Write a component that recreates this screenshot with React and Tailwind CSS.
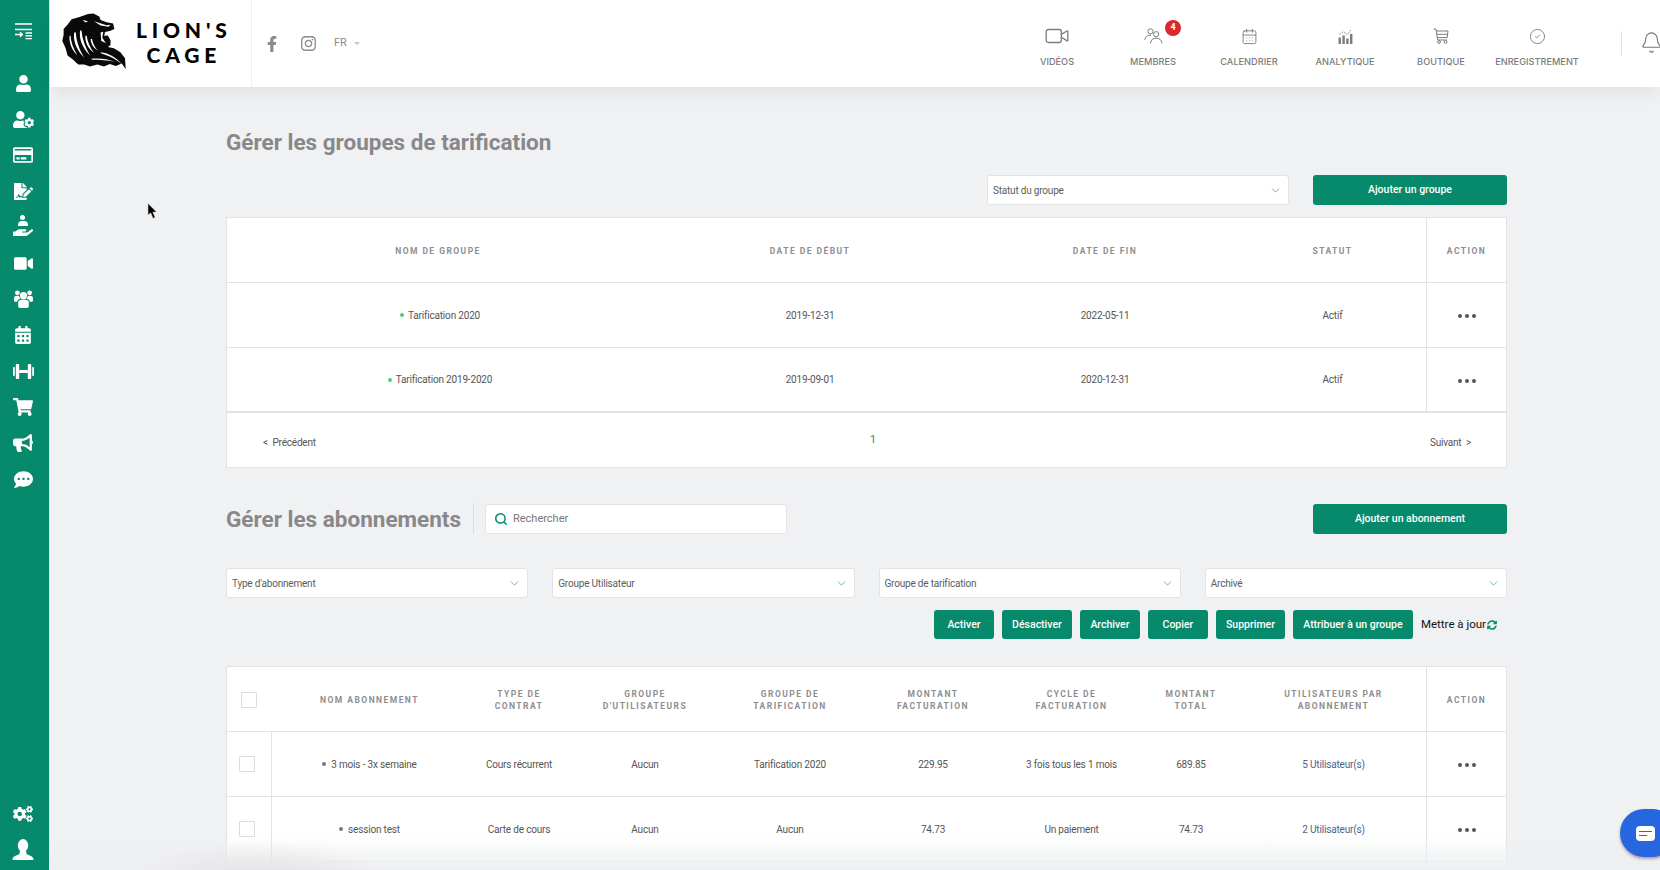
import { ChevronDown, Search, Video, CalendarDays, CircleCheck, Bell } from "lucide-react";
import { FaUser, FaUserCog, FaRegCreditCard, FaFileSignature, FaHandHolding, FaVideo, FaCalendarAlt, FaShoppingCart, FaBullhorn, FaCommentDots, FaCogs, FaFacebookF, FaInstagram, FaSyncAlt } from "react-icons/fa";

const LionLogo = () => (
  <svg viewBox="30 30 200 180" className="w-[66px] h-[60px] shrink-0 -mt-[5px]">
    <path
      fill="#0a0a0a"
      d="M112 38 L128 37 L146 46 L150 56 L168 63 L188 67 L192 84 L178 90 L166 92 L160 104 L172 103 L180 118 L180 132 L172 138 L190 142 L210 154 L224 172 L226 205 L214 188 L196 196 L178 190 L160 197 L140 191 L118 197 L100 191 L82 191 L66 176 L50 164 L44 142 L34 120 L38 100 L38 84 L52 68 L62 54 L84 48 Z"
    />
    <g fill="#fff">
      <path d="M56 104 C54 124 62 146 80 164 C68 144 60 124 59 104 Z" />
      <path d="M70 94 C66 118 76 146 100 170 C86 146 76 120 75 94 Z" />
      <path d="M88 88 C84 112 94 140 118 164 C104 140 94 114 92 88 Z" />
      <path d="M104 104 C102 124 112 142 130 156 C118 140 110 122 108 104 Z" />
      <path d="M120 114 C120 128 128 140 142 150 C132 138 126 126 124 114 Z" />
      <path d="M150 154 C172 156 196 168 216 192 C196 174 172 164 152 158 Z" />
      <path d="M122 174 C146 172 172 174 194 184 C172 178 146 177 124 177 Z" />
      <path d="M130 60 L168 72 L180 71 L174 77 L150 73 Z" />
      <path d="M96 56 L112 60 L104 64 Z" />
      <path d="M150 94 L158 92 L155 110 L166 126 L152 120 Z" />
      <path d="M162 94 L176 92 L172 97 L163 98 Z" />
    </g>
  </svg>
);

const PersonOverHand = () => (
  <span className="relative flex h-5 w-5 items-end justify-center">
    <span className="absolute top-[-2px] left-[7px] h-[5px] w-[5px] rounded-full bg-white" />
    <span className="absolute top-[4px] left-[5px] h-[5px] w-[10px] rounded-t-[4px] bg-white" />
    <FaHandHolding size={20} />
  </span>
);

const Bust = () => (
  <svg viewBox="0 0 22 22" className="w-[22px] h-[22px]" fill="#fff">
    <ellipse cx="11" cy="6.5" rx="5.2" ry="6.5" />
    <path d="M8 12 L14 12 L14.6 15 C17 16.6 20 16.8 21.5 19.4 C22 20.6 21 21 20 21 L2 21 C1 21 0 20.6 .5 19.4 C2 16.8 5 16.6 7.4 15 Z" />
  </svg>
);

const IndentIcon = () => (
  <svg viewBox="0 0 17 17" className="w-[17px] h-[17px]" fill="none" stroke="#fff" strokeWidth="1.4">
    <path d="M0 1h17M0 6.5h17" />
    <path d="M0 11.5h7M5 9.3l2.4 2.2L5 13.7M10.5 10h6.5M10.5 12.8h6.5M10.5 15.6h6.5" />
  </svg>
);

const Dumbbell = () => (
  <svg viewBox="0 0 21 15" className="w-[21px] h-[15px]" fill="#fff">
    <rect x="0" y="3" width="1.8" height="9" rx=".8" />
    <rect x="2.8" y="0" width="3.4" height="15" rx="1" />
    <rect x="6.2" y="6" width="8.6" height="3" />
    <rect x="14.8" y="0" width="3.4" height="15" rx="1" />
    <rect x="19.2" y="3" width="1.8" height="9" rx=".8" />
  </svg>
);

const Group = () => (
  <svg viewBox="0 0 19 18" className="w-[19px] h-[18px]" fill="#fff">
    <circle cx="9.5" cy="5.6" r="3.6" />
    <circle cx="3.4" cy="2.8" r="2.4" />
    <circle cx="15.6" cy="2.8" r="2.4" />
    <path d="M4.2 12.6 C4.2 10.4 6 9.6 9.5 9.6 C13 9.6 14.8 10.4 14.8 12.6 L14.8 16 C14.8 17 14 18 13 18 L6 18 C5 18 4.2 17 4.2 16 Z" />
    <path d="M0 8.4 C0 6.4 1.4 5.8 3.4 5.8 L5 6 C5.4 7.2 6 8 6.6 8.6 C4.6 9.2 3.4 10 3.2 11.8 L1 11.8 C.4 11.8 0 11.2 0 10.6 Z" />
    <path d="M19 8.4 C19 6.4 17.6 5.8 15.6 5.8 L14 6 C13.6 7.2 13 8 12.4 8.6 C14.4 9.2 15.6 10 15.8 11.8 L18 11.8 C18.6 11.8 19 11.2 19 10.6 Z" />
  </svg>
);

const sideIcons = [
  <FaUser size={17} />,
  <FaUserCog size={21} />,
  <FaRegCreditCard size={20} />,
  <FaFileSignature size={19} />,
  <PersonOverHand />,
  <FaVideo size={19} />,
  <Group />,
  <FaCalendarAlt size={18} />,
  <Dumbbell />,
  <FaShoppingCart size={20} />,
  <FaBullhorn size={20} />,
  <FaCommentDots size={19} />,
];

const Sidebar = () => (
  <aside className="w-[50px] shrink-0 pr-[3px] bg-[#078a6c] border-r border-[#cfe6df] text-white flex flex-col items-center">
    <div className="mt-[23px] mb-[25px] h-[17px]">
      <IndentIcon />
    </div>
    {sideIcons.map((icon, i) => (
      <div key={i} className="h-[36px] flex items-center justify-center">
        {icon}
      </div>
    ))}
    <div className="mt-auto mb-[9px] flex flex-col items-center gap-[15px]">
      <FaCogs size={20} />
      <Bust />
    </div>
  </aside>
);

const MembersIcon = () => (
  <svg viewBox="0 0 19 16" className="w-[19px] h-[16px]" fill="none" stroke="currentColor" strokeWidth="1">
    <circle cx="6.5" cy="3.4" r="2.6" />
    <circle cx="12.2" cy="6.2" r="2.6" />
    <path d="M.7 11.8 C1.4 8.8 3.4 7.2 7 7.2" />
    <path d="M6.4 15.4 C6.8 11.8 9 10.2 12.2 10.2 C15.4 10.2 17.6 11.8 18 15.4" />
  </svg>
);

const AnalyticsIcon = () => (
  <svg viewBox="0 0 15 16" className="w-[15px] h-[16px]" fill="currentColor">
    <rect x="0.5" y="9.5" width="2.4" height="6.5" />
    <rect x="4.4" y="7.5" width="2.4" height="8.5" />
    <rect x="8.2" y="10.5" width="2.4" height="5.5" />
    <rect x="12" y="6" width="2.4" height="10" />
    <path d="M1.6 6.4 L5.6 3.6 L9.4 6.8 L13.4 1.2" fill="none" stroke="currentColor" strokeWidth=".9" strokeDasharray="1.6 1.2" />
  </svg>
);

const CartIcon = () => (
  <svg viewBox="0 0 16 16" className="w-[16px] h-[16px]" fill="none" stroke="currentColor" strokeWidth="1">
    <path d="M.5 1 H3 L4.6 12 H14" />
    <path d="M3.3 3 H15 L14.2 9.6 H4.3" />
    <path d="M3.8 6.3 H14.6" />
    <circle cx="6" cy="14" r="1.4" />
    <circle cx="12.6" cy="14" r="1.4" />
  </svg>
);

const navItems = [
  { label: "VIDÉOS", icon: <Video size={26} strokeWidth={1.2} /> },
  { label: "MEMBRES", icon: <MembersIcon />, badge: "4" },
  { label: "CALENDRIER", icon: <CalendarDays size={17} strokeWidth={1.3} /> },
  { label: "ANALYTIQUE", icon: <AnalyticsIcon /> },
  { label: "BOUTIQUE", icon: <CartIcon /> },
  { label: "ENREGISTREMENT", icon: <CircleCheck size={17} strokeWidth={1.3} /> },
];

const Header = () => (
  <header className="h-[87px] shrink-0 bg-white flex shadow-[0_10px_16px_-2px_rgba(0,0,0,0.06)] relative z-10">
    <div className="w-[202px] shrink-0 border-r border-[#f0f0f2] flex items-center pl-[11px] gap-[9px]">
      <LionLogo />
      <div className="-mt-[4px] font-['Lato',sans-serif] font-black text-[21px] leading-[25px] tracking-[0.23em] text-center text-black">
        <div>LION'S</div>
        <div>CAGE</div>
      </div>
    </div>
    <div className="flex items-center pl-[12px] text-[#8a8a8a]">
      <FaFacebookF size={16} />
      <FaInstagram size={17} className="ml-[20px]" />
      <span className="ml-[17px] text-[11px]">FR</span>
      <span className="ml-[7px] w-0 h-0 border-x-[3px] border-x-transparent border-t-[3px] border-t-[#c4c4c4]" />
    </div>
    <nav className="ml-auto flex items-start text-[#7c7c7c]">
      {navItems.map((n) => (
        <div key={n.label} className="w-[96px] pt-[27px] flex flex-col items-center relative">
          <div className="h-[18px] flex items-center">{n.icon}</div>
          <div className="mt-[11px] text-[9.2px] font-['Inter',sans-serif] font-medium leading-[12px] whitespace-nowrap">{n.label}</div>
          {n.badge && (
            <span className="absolute top-[20px] left-[60px] h-4 w-4 rounded-full bg-[#d9292f] text-white text-[9px] font-bold flex items-center justify-center">
              {n.badge}
            </span>
          )}
        </div>
      ))}
      <div className="ml-[36px] mt-[31px] w-[39px] h-[24px] border-l border-[#e0e0e0] overflow-visible pl-[18px] text-[#777]">
        <Bell size={23} strokeWidth={1.2} />
      </div>
    </nav>
  </header>
);

const Select = ({ label, className = "" }) => (
  <div className={"h-[30px] bg-white border border-[#e3e3e6] rounded-[3px] flex items-center justify-between pl-[5px] pr-[6px] text-[10px] tracking-[-0.02em] text-[#5c5c5c] " + className}>
    {label}
    <ChevronDown size={13} strokeWidth={1.1} className="text-[#078a6c]" />
  </div>
);

const GreenBtn = ({ children, className }) => (
  <button className={"bg-[#078a6c] text-white text-[10.5px] font-medium rounded-[3px] flex items-center justify-center " + className}>
    {children}
  </button>
);

const Dots = () => (
  <span className="flex gap-[3px] mt-[2px]">
    <i className="w-1 h-1 rounded-full bg-[#555]" />
    <i className="w-1 h-1 rounded-full bg-[#555]" />
    <i className="w-1 h-1 rounded-full bg-[#555]" />
  </span>
);

const Th = ({ children, className = "" }) => (
  <div className={"flex items-center justify-center text-center pt-[1px] text-[8.5px] font-bold tracking-[0.17em] leading-[12px] text-[#8e8e90] " + className}>
    {children}
  </div>
);

const Td = ({ children, className = "text-[#555]" }) => (
  <div className={"flex items-center justify-center text-center text-[10px] tracking-[-0.018em] " + className}>
    {children}
  </div>
);

const groups = [
  { name: "Tarification 2020", start: "2019-12-31", end: "2022-05-11", status: "Actif" },
  { name: "Tarification 2019-2020", start: "2019-09-01", end: "2020-12-31", status: "Actif" },
];

const subs = [
  { name: "3 mois - 3x semaine", type: "Cours récurrent", group: "Aucun", tarif: "Tarification 2020", amount: "229.95", cycle: "3 fois tous les 1 mois", total: "689.85", users: "5 Utilisateur(s)" },
  { name: "session test", type: "Carte de cours", group: "Aucun", tarif: "Aucun", amount: "74.73", cycle: "Un paiement", total: "74.73", users: "2 Utilisateur(s)" },
];

const groupCols = "grid grid-cols-[422px_322px_268px_187px_1fr]";
const subCols = "grid grid-cols-[45px_195px_104px_148px_142px_144px_133px_106px_182px_1fr]";

const GroupsTable = () => (
  <div className="mt-[12px] bg-white border border-[#e3e3e6]">
    <div className={groupCols + " h-[65px] border-b border-[#e3e3e6]"}>
      <Th>NOM DE GROUPE</Th>
      <Th>DATE DE DÉBUT</Th>
      <Th>DATE DE FIN</Th>
      <Th>STATUT</Th>
      <Th className="border-l border-[#e3e3e6]">ACTION</Th>
    </div>
    {groups.map((g, i) => (
      <div key={g.name} className={groupCols + " h-[65px] " + (i === 0 ? "border-b border-[#e3e3e6]" : "border-b-2 border-[#e3e3e6]")}>
        <Td className="pl-[4px]">
          <i className="w-1 h-1 rounded-full bg-[#4fcb7c] mr-[4px]" />
          <span className="text-[#555]">{g.name}</span>
        </Td>
        <Td>{g.start}</Td>
        <Td>{g.end}</Td>
        <Td>{g.status}</Td>
        <Td className="border-l border-[#e3e3e6]"><Dots /></Td>
      </div>
    ))}
    <div className="h-[54px] relative flex items-center justify-between pl-[36px] pr-[35px] text-[10px] tracking-[-0.02em] text-[#555]">
      <span className="mt-[5px]">&lt;&nbsp; Précédent</span>
      <span className="text-[11.5px] text-[#12977a] -mt-[1px]">1</span>
      <span className="mt-[5px]">Suivant &nbsp;&gt;</span>
    </div>
  </div>
);

const SubsTable = () => (
  <div className="mt-[27px] bg-white border border-[#e3e3e6] border-b-0">
    <div className={subCols + " h-[65px] border-b border-[#e3e3e6]"}>
      <Th className="justify-start pl-[14px]">
        <span className="block w-[16px] h-[16px] border border-[#dcdcdf] rounded-[1px]" />
      </Th>
      <Th>NOM ABONNEMENT</Th>
      <Th>TYPE DE<br />CONTRAT</Th>
      <Th>GROUPE<br />D'UTILISATEURS</Th>
      <Th>GROUPE DE<br />TARIFICATION</Th>
      <Th>MONTANT<br />FACTURATION</Th>
      <Th>CYCLE DE<br />FACTURATION</Th>
      <Th>MONTANT<br />TOTAL</Th>
      <Th className="pr-[3px]">UTILISATEURS PAR<br />ABONNEMENT</Th>
      <Th className="border-l border-[#e3e3e6]">ACTION</Th>
    </div>
    {subs.map((s) => (
      <div key={s.name} className={subCols + " h-[65px] border-b border-[#e3e3e6]"}>
        <Td className="justify-start pl-[12px] border-r border-[#e3e3e6]">
          <span className="block w-[16px] h-[16px] border border-[#dcdcdf] rounded-[1px]" />
        </Td>
        <Td>
          <i className="w-1 h-1 rounded-full bg-[#777] mr-[5px]" />
          <span className="text-[#555]">{s.name}</span>
        </Td>
        <Td className="text-[#555]">{s.type}</Td>
        <Td>{s.group}</Td>
        <Td>{s.tarif}</Td>
        <Td>{s.amount}</Td>
        <Td>{s.cycle}</Td>
        <Td>{s.total}</Td>
        <Td className="pr-[3px] text-[#4a6489]">{s.users}</Td>
        <Td className="border-l border-[#e3e3e6]"><Dots /></Td>
      </div>
    ))}
    <div className={subCols + " h-[20px]"}>
      <div className="border-r border-[#e3e3e6]" />
      <div className="col-span-8" />
      <div className="border-l border-[#e3e3e6]" />
    </div>
  </div>
);

const Cursor = () => (
  <svg viewBox="0 0 12 18" className="absolute left-[147px] top-[203px] w-[11px] h-[17px] z-20">
    <path d="M1 0 L1 13 L4 10.5 L6.5 16.5 L9 15.5 L6.5 9.8 L10.5 9.5 Z" fill="#000" stroke="#fff" strokeWidth=".6" />
  </svg>
);

export default function App() {
  return (
    <div className="relative flex w-[1660px] h-[870px] overflow-hidden bg-[#f0f1f3] font-['Roboto',sans-serif]">
      <Sidebar />
      <div className="flex-1 flex flex-col min-w-0">
        <Header />
        <main className="pl-[176px] pr-[153px]">
          <h1 className="mt-[41px] text-[22.5px] leading-[29px] font-bold text-[#88888a]">Gérer les groupes de tarification</h1>
          <div className="mt-[18px] flex justify-end gap-[24px]">
            <Select label="Statut du groupe" className="w-[302px]" />
            <GreenBtn className="w-[194px] h-[30px]">Ajouter un groupe</GreenBtn>
          </div>
          <GroupsTable />

          <div className="mt-[35px] flex items-center">
            <h2 className="text-[22.5px] leading-[30px] font-bold text-[#88888a]">Gérer les abonnements</h2>
            <div className="ml-[12px] h-[31px] border-l border-[#dcdcdf]" />
            <div className="ml-[11px] w-[302px] h-[30px] bg-white border border-[#e3e3e6] rounded-[3px] flex items-center pl-[8px] pt-[1px] text-[11px] text-[#777]">
              <Search size={14} strokeWidth={2.6} className="text-[#078a6c] mr-[5px]" />
              Rechercher
            </div>
            <GreenBtn className="ml-auto w-[194px] h-[30px]">Ajouter un abonnement</GreenBtn>
          </div>

          <div className="mt-[34px] grid grid-cols-4 gap-[24px]">
            <Select label="Type d'abonnement" />
            <Select label="Groupe Utilisateur" />
            <Select label="Groupe de tarification" />
            <Select label="Archivé" />
          </div>

          <div className="mt-[12px] flex items-center justify-end gap-[8px] pr-[10px]">
            <GreenBtn className="w-[60px] h-[29px]">Activer</GreenBtn>
            <GreenBtn className="w-[70px] h-[29px]">Désactiver</GreenBtn>
            <GreenBtn className="w-[60px] h-[29px]">Archiver</GreenBtn>
            <GreenBtn className="w-[60px] h-[29px]">Copier</GreenBtn>
            <GreenBtn className="w-[69px] h-[29px]">Supprimer</GreenBtn>
            <GreenBtn className="w-[120px] h-[29px]">Attribuer à un groupe</GreenBtn>
            <span className="ml-0 text-[11.5px] text-[#111] flex items-center gap-[2px]">
              Mettre à jour <FaSyncAlt size={10} className="text-[#078a6c] ml-[-1px]" />
            </span>
          </div>

          <SubsTable />
        </main>
      </div>
      <Cursor />
      <div className="absolute left-[49px] right-0 bottom-0 h-[34px] bg-gradient-to-t from-[#eeeff1] to-transparent z-10" />
      <div className="absolute left-[130px] top-[840px] w-[260px] h-[90px] bg-[radial-gradient(closest-side,#e2e0e2,transparent)] z-10" />
      <div className="absolute left-[1620px] top-[809px] w-[56px] h-[48px] rounded-full bg-[#2667e0] shadow-[0_2px_3px_rgba(90,30,60,0.4)] z-20 flex items-center pl-[16px]">
        <span className="relative block w-[19px] h-[15px] bg-white rounded-[4px]">
          <i className="absolute left-[3px] top-[5px] w-[13px] h-[1.5px] bg-[#2667e0]" />
          <i className="absolute left-[3px] top-[9px] w-[8px] h-[1.5px] bg-[#2667e0]" />
        </span>
      </div>
    </div>
  );
}
